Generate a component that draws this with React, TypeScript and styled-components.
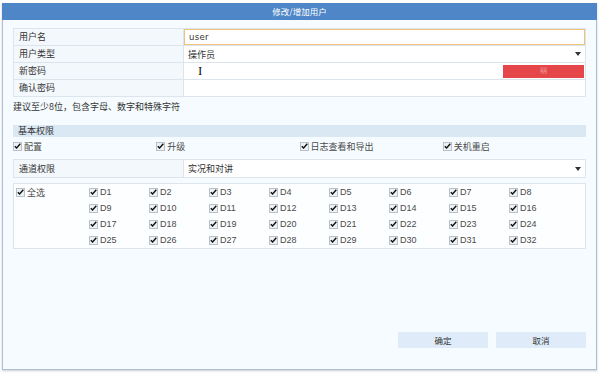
import styled, { createGlobalStyle } from 'styled-components'

const GlobalStyle = createGlobalStyle`
  html, body {
    margin: 0;
    padding: 0;
    background: #ffffff;
  }
  body {
    font-family: "Noto Sans CJK SC", "Liberation Sans", sans-serif;
    font-size: 9px;
    color: #333;
  }
`

const channels = Array.from({ length: 32 }, (_, i) => `D${i + 1}`)
const basicRights = ['配置', '升级', '日志查看和导出', '关机重启']

const Check = ({ label }: { label: string }) => (
  <CheckItem>
    <CheckBox>
      <svg width="7" height="6" viewBox="0 0 7 6">
        <path d="M0.8 3.2 L2.6 5 L6.3 0.8" fill="none" stroke="#111" strokeWidth="1.4" />
      </svg>
    </CheckBox>
    <span>{label}</span>
  </CheckItem>
)

const Arrow = () => (
  <svg width="6" height="4" viewBox="0 0 6 4">
    <path d="M0 0 H6 L3 4 Z" fill="#333" />
  </svg>
)

const App = () => {
  return (
    <Page>
      <GlobalStyle />
      <Dialog>
        <TitleBar>修改/增加用户</TitleBar>
        <Body>
          <FormTable>
            <LabelCell>用户名</LabelCell>
            <ValueCell>
              <TextInput focused>user</TextInput>
            </ValueCell>
            <LabelCell>用户类型</LabelCell>
            <ValueCell>
              <SelectBox>
                <span>操作员</span>
                <Arrow />
              </SelectBox>
            </ValueCell>
            <LabelCell>新密码</LabelCell>
            <ValueCell>
              <TextInput>
                <Caret>I</Caret>
                <Strength>弱</Strength>
              </TextInput>
            </ValueCell>
            <LabelCell last>确认密码</LabelCell>
            <ValueCell last>
              <TextInput />
            </ValueCell>
          </FormTable>

          <Hint>建议至少8位，包含字母、数字和特殊字符</Hint>

          <SectionHeader>基本权限</SectionHeader>
          <RightsRow>
            {basicRights.map((r) => (
              <Check key={r} label={r} />
            ))}
          </RightsRow>

          <ChannelRow>
            <LabelCell last>通道权限</LabelCell>
            <ValueCell last>
              <SelectBox>
                <span>实况和对讲</span>
                <Arrow />
              </SelectBox>
            </ValueCell>
          </ChannelRow>

          <ChannelBox>
            <AllCol>
              <Check label="全选" />
            </AllCol>
            <ChannelGrid>
              {channels.map((c) => (
                <Check key={c} label={c} />
              ))}
            </ChannelGrid>
          </ChannelBox>

          <Footer>
            <Button>确定</Button>
            <Button>取消</Button>
          </Footer>
        </Body>
      </Dialog>
    </Page>
  )
}

export default App

const Page = styled.div`
  width: 600px;
  height: 373px;
  padding: 3px 3px 3px 2px;
  box-sizing: border-box;
`

const Dialog = styled.div`
  width: 595px;
  height: 367px;
  box-sizing: border-box;
  border: 1px solid #aebfd2;
  border-top: none;
  background: #f5fbfe;
  display: flex;
  flex-direction: column;
  box-shadow: 0 1px 2px rgba(90, 110, 140, 0.35);
`

const TitleBar = styled.div`
  height: 17px;
  margin: 0 -1px;
  background: #4e86c7;
  color: #fff;
  font-size: 8.5px;
  line-height: 17px;
  text-align: center;
`

const Body = styled.div`
  flex: 1;
  display: flex;
  flex-direction: column;
  padding: 8px 10px 21px 10px;
`

const FormTable = styled.div`
  display: grid;
  grid-template-columns: 170px 1fr;
  border: 1px solid #dde5ec;
`

const LabelCell = styled.div<{ last?: boolean }>`
  height: 16px;
  line-height: 16px;
  padding-left: 5px;
  background: #f3f8fc;
  border-right: 1px solid #dde5ec;
  border-bottom: ${({ last }) => (last ? 'none' : '1px solid #dde5ec')};
  color: #333;
`

const ValueCell = styled.div<{ last?: boolean }>`
  height: 16px;
  background: #fff;
  border-bottom: ${({ last }) => (last ? 'none' : '1px solid #dde5ec')};
  display: flex;
`

const TextInput = styled.div<{ focused?: boolean }>`
  flex: 1;
  position: relative;
  display: flex;
  align-items: center;
  padding-left: 4px;
  box-sizing: border-box;
  border: 1px solid ${({ focused }) => (focused ? '#f0c27a' : 'transparent')};
  font-family: "DejaVu Sans", "Liberation Sans", sans-serif;
  font-size: 8.5px;
  letter-spacing: 0.3px;
  color: #333;
`

const Caret = styled.span`
  margin-left: 9px;
  font-family: "Liberation Serif", serif;
  font-size: 13px;
  color: #111;
`

const Strength = styled.div`
  position: absolute;
  right: 0;
  top: 1px;
  width: 81px;
  height: 13px;
  background: #e4464a;
  color: #f5a0a3;
  font-size: 7px;
  line-height: 13px;
  text-align: center;
`

const SelectBox = styled.div`
  flex: 1;
  display: flex;
  align-items: center;
  justify-content: space-between;
  padding: 0 4px 0 4px;
  color: #333;
`

const Hint = styled.div`
  margin-top: 3px;
  height: 13px;
  line-height: 13px;
  color: #333;
`

const SectionHeader = styled.div`
  margin-top: 12px;
  height: 12px;
  line-height: 12px;
  padding-left: 5px;
  background: #dae8f3;
  color: #333;
`

const RightsRow = styled.div`
  display: grid;
  grid-template-columns: repeat(4, 1fr);
  height: 16px;
  align-items: center;
  padding-top: 1px;
`

const CheckItem = styled.div`
  display: flex;
  align-items: center;
  gap: 2px;
  height: 16px;
  font-family: "Liberation Sans", "Noto Sans CJK SC", sans-serif;
  font-size: 9px;
  color: #4a4a4a;
  white-space: nowrap;
`

const CheckBox = styled.span`
  width: 7px;
  height: 7px;
  border: 1px solid #b9c2cb;
  background: #eef1f4;
  display: inline-flex;
  align-items: center;
  justify-content: center;
  svg {
    margin-top: -1px;
  }
`

const ChannelRow = styled.div`
  margin-top: 5px;
  display: grid;
  grid-template-columns: 170px 1fr;
  border: 1px solid #dde5ec;
  & > div {
    height: 17px;
    line-height: 17px;
  }
`

const ChannelBox = styled.div`
  margin-top: 5px;
  display: flex;
  border: 1px solid #dde5ec;
  background: #fdfeff;
  padding: 0 0 0 2px;
`

const AllCol = styled.div`
  width: 73px;
`

const ChannelGrid = styled.div`
  display: grid;
  grid-template-columns: repeat(8, 60px);
`

const Footer = styled.div`
  margin-top: auto;
  display: flex;
  justify-content: flex-end;
  gap: 8px;
`

const Button = styled.div`
  width: 90px;
  height: 16px;
  line-height: 16px;
  background: #dfebf8;
  text-align: center;
  color: #333;
  font-size: 8.5px;
`
